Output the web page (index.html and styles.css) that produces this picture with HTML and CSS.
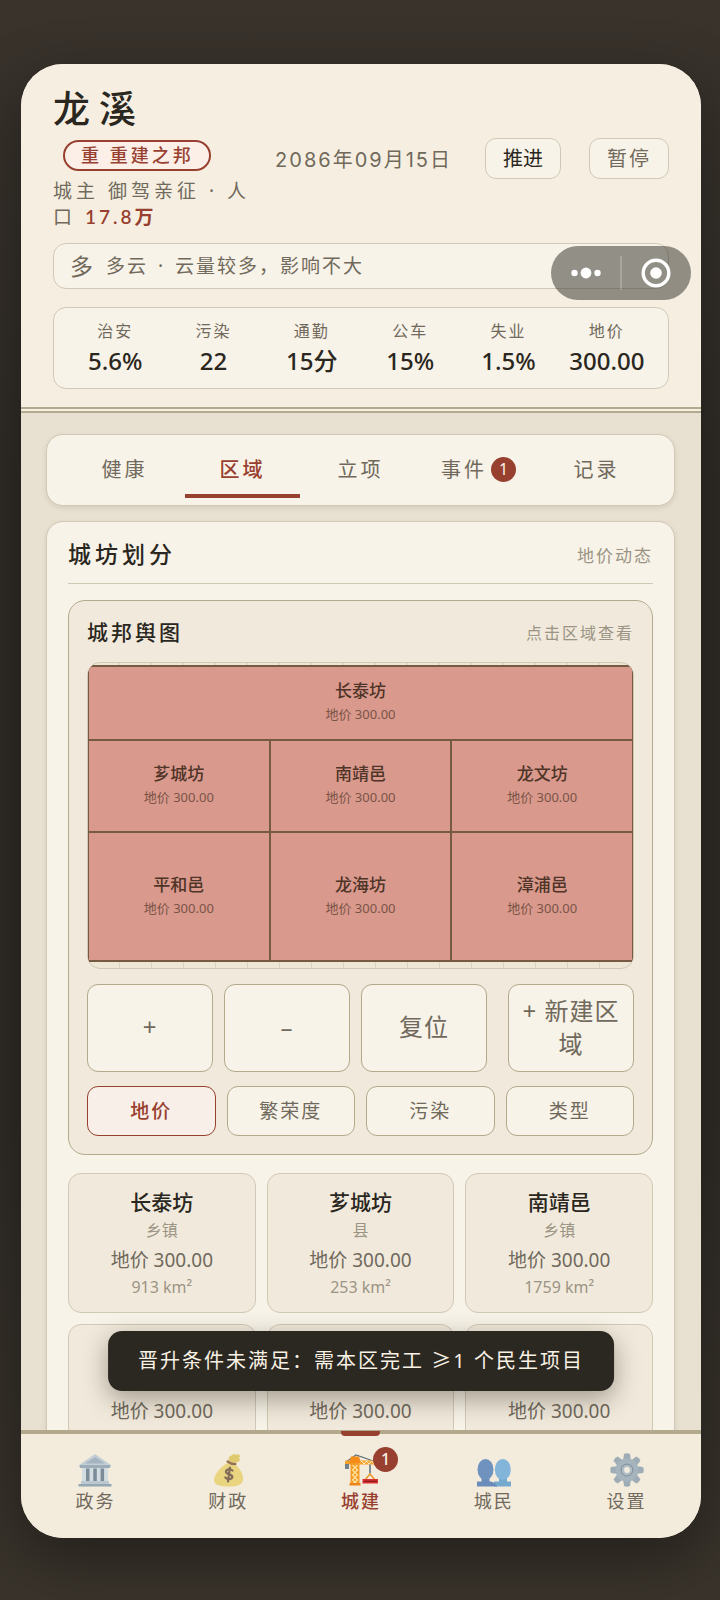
FILE: index.html
```html
<!DOCTYPE html>
<html lang="zh-CN">
<head>
<meta charset="utf-8">
<meta name="viewport" content="width=device-width, initial-scale=1">
<title>龙溪</title>
<link rel="stylesheet" href="styles.css">
</head>
<body>
<div class="phone">
  <header class="header">
    <div class="head-row">
      <div class="identity">
        <h1 class="city">龙溪</h1>
        <span class="rank">重 重建之邦</span>
        <p class="lord">城主 御驾亲征 · 人口 <strong class="population">17.8万</strong></p>
      </div>
      <time class="date" datetime="2086-09-15">2086年09月15日</time>
      <button class="head-btn head-btn-main" type="button">推进</button>
      <button class="head-btn" type="button">暂停</button>
    </div>
    <div class="weather"><span class="weather-icon">多</span><span>多云<span class="dot"> · </span>云量较多，影响不大</span></div>
    <dl class="stats">
      <div class="stat"><dt>治安</dt><dd>5.6%</dd></div>
      <div class="stat"><dt>污染</dt><dd>22</dd></div>
      <div class="stat"><dt>通勤</dt><dd>15分</dd></div>
      <div class="stat"><dt>公车</dt><dd>15%</dd></div>
      <div class="stat"><dt>失业</dt><dd>1.5%</dd></div>
      <div class="stat"><dt>地价</dt><dd>300.00</dd></div>
    </dl>
  </header>

  <main class="content">
    <div class="tabs">
      <button class="tab" type="button">健康</button>
      <button class="tab tab-active" type="button">区域</button>
      <button class="tab" type="button">立项</button>
      <button class="tab" type="button">事件<span class="badge">1</span></button>
      <button class="tab" type="button">记录</button>
    </div>

    <section class="card">
      <div class="card-head">
        <h2 class="card-title">城坊划分</h2>
        <span class="card-note">地价动态</span>
      </div>

      <div class="map-card">
        <div class="map-head">
          <h3 class="map-title">城邦舆图</h3>
          <span class="map-note">点击区域查看</span>
        </div>
        <div class="map">
          <div class="regions">
            <button class="region region-wide" type="button"><span class="region-name">长泰坊</span><span class="region-price">地价 300.00</span></button>
            <button class="region" type="button"><span class="region-name">芗城坊</span><span class="region-price">地价 300.00</span></button>
            <button class="region" type="button"><span class="region-name">南靖邑</span><span class="region-price">地价 300.00</span></button>
            <button class="region" type="button"><span class="region-name">龙文坊</span><span class="region-price">地价 300.00</span></button>
            <button class="region" type="button"><span class="region-name">平和邑</span><span class="region-price">地价 300.00</span></button>
            <button class="region" type="button"><span class="region-name">龙海坊</span><span class="region-price">地价 300.00</span></button>
            <button class="region" type="button"><span class="region-name">漳浦邑</span><span class="region-price">地价 300.00</span></button>
          </div>
        </div>
        <div class="tools">
          <button class="tool" type="button">+</button>
          <button class="tool" type="button">–</button>
          <button class="tool" type="button">复位</button>
          <button class="tool tool-new" type="button">+ 新建区域</button>
        </div>
        <div class="layers">
          <button class="layer layer-active" type="button">地价</button>
          <button class="layer" type="button">繁荣度</button>
          <button class="layer" type="button">污染</button>
          <button class="layer" type="button">类型</button>
        </div>
      </div>

      <div class="districts">
        <article class="district"><h4>长泰坊</h4><p class="kind">乡镇</p><p class="price">地价 300.00</p><p class="area">913 km²</p></article>
        <article class="district"><h4>芗城坊</h4><p class="kind">县</p><p class="price">地价 300.00</p><p class="area">253 km²</p></article>
        <article class="district"><h4>南靖邑</h4><p class="kind">乡镇</p><p class="price">地价 300.00</p><p class="area">1759 km²</p></article>
        <article class="district"><h4>龙文坊</h4><p class="kind">县</p><p class="price">地价 300.00</p></article>
        <article class="district"><h4>平和邑</h4><p class="kind">乡镇</p><p class="price">地价 300.00</p></article>
        <article class="district"><h4>龙海坊</h4><p class="kind">县</p><p class="price">地价 300.00</p></article>
      </div>
    </section>
  </main>

  <nav class="nav">
    <button class="nav-item" type="button">
      <svg class="nav-icon" viewBox="0 0 34 34" aria-hidden="true">
        <path d="M1 12 17 1l16 11v2H1z" fill="#b4c5d3"/><path d="M7 10.500 17 4l10 6.500z" fill="#8ca2b6"/>
        <path d="M2 12h30v3H2z" fill="#7f97ad"/><path d="M4 15h26v14H4z" fill="#c9d7e2"/>
        <path d="M8 15.500h3.500V29H8zM15.300 15.500h3.500V29h-3.500zM22.600 15.500h3.500V29h-3.500z" fill="#536b80"/>
        <path d="M3 28h28v3H3z" fill="#a9bccb"/><path d="M.5 31h33v2.500H.5z" fill="#7790a6"/>
      </svg>
      <span>政务</span>
    </button>
    <button class="nav-item" type="button">
      <svg class="nav-icon" viewBox="0 0 34 34" aria-hidden="true">
        <path d="M18 9c-1-4 0-6 2-6 1-2 4-3 5-1 3-2 5 1 3 3 2 2 0 4-2 4l-3 3z" fill="#d9bf4c"/>
        <path d="M16 10c-6 4-13 11-13 17 0 5 6 6.500 14.500 6.500S32 32 32 26c0-7-4-11-8-15z" fill="#e6ce62"/>
        <path d="M16.500 8.500c2 1.500 5 2.800 8 2.500" fill="none" stroke="#75492f" stroke-width="2.200" stroke-linecap="round"/>
        <path d="M21.500 17.500c-2-2-6.500-1.500-6.500 1.300 0 3.200 6.500 2 6.300 5.200-.2 2.700-5 2.700-7 .5M19 14.500 17 28.500" fill="none" stroke="#5d4130" stroke-width="2.200" stroke-linecap="round"/>
      </svg>
      <span>财政</span>
    </button>
    <button class="nav-item nav-active" type="button">
      <span class="nav-art">
        <svg class="nav-icon" viewBox="0 0 34 34" aria-hidden="true">
          <path d="M2 9 12 2l20 7" fill="none" stroke="#5f6f78" stroke-width="1.200"/>
          <path d="M1 7.500h32v4H1z" fill="#f7a12b"/><path d="m15 11 2.500-3 2.500 3 2.500-3 2.500 3 2.500-3 2.500 3" fill="none" stroke="#fff0c8"/>
          <path d="M7 3.500h8l2 7H5z" fill="#f58b19"/><path d="M6.500 10.500h9V31h-9z" fill="#f59a23"/>
          <path d="m8.500 12 5 5-5 5 5 5-5 4m5-19-5 5 5 5-5 5 5 4" fill="none" stroke="#ffe2a0" stroke-width="1.300"/>
          <path d="M1 11h4v5H1z" fill="#71818c"/><path d="M5.500 30h11v2.500h-11z" fill="#ee8519"/>
          <path d="M26 11.500v9" stroke="#59707c" stroke-width="1.500"/><path d="m21 27 5-6 5 6" fill="none" stroke="#e99928" stroke-width="1.500"/>
          <path d="M18.500 26H34v4.500H18.500z" fill="#d83332"/><path d="M20 28.300h13" stroke="#8c1718" stroke-width="1.200"/>
        </svg>
        <span class="badge nav-badge">1</span>
      </span>
      <span>城建</span>
    </button>
    <button class="nav-item" type="button">
      <svg class="nav-icon" viewBox="0 0 34 34" aria-hidden="true">
        <path d="M17 33.500V28.500h17v5z" fill="#4b93c9"/><path d="M22 24h8v6h-8z" fill="#4b93c9"/>
        <ellipse cx="25.800" cy="16.500" rx="8" ry="10.500" fill="#5da3d8"/>
        <path d="M0 33.500V28.500h12c4 0 7 2 8 5z" fill="#3d6dae"/><path d="M4.500 24h8v6h-8z" fill="#3d6dae"/>
        <ellipse cx="8.500" cy="16.500" rx="8" ry="10.500" fill="#4575b6"/>
      </svg>
      <span>城民</span>
    </button>
    <button class="nav-item" type="button">
      <svg class="nav-icon" viewBox="0 0 34 34" aria-hidden="true">
        <g fill="#8298a8"><path id="tooth" d="M14 1q3-1.500 6 0l.8 6h-7.600z"/><use href="#tooth" transform="rotate(45 17 17)"/><use href="#tooth" transform="rotate(90 17 17)"/><use href="#tooth" transform="rotate(135 17 17)"/><use href="#tooth" transform="rotate(180 17 17)"/><use href="#tooth" transform="rotate(225 17 17)"/><use href="#tooth" transform="rotate(270 17 17)"/><use href="#tooth" transform="rotate(315 17 17)"/></g>
        <circle cx="17" cy="17" r="8.500" fill="none" stroke="#8da3b3" stroke-width="6"/>
        <circle cx="17" cy="17" r="5.800" fill="#9db1bf" stroke="#60798c" stroke-width="1.200"/>
        <circle cx="17" cy="17" r="2.900" fill="#f1ecdf"/>
      </svg>
      <span>设置</span>
    </button>
  </nav>

  <div class="toast" role="status">晋升条件未满足：需本区完工 ≥1 个民生项目</div>

  <div class="capsule">
    <button class="capsule-btn" type="button" aria-label="更多"><svg class="dots" viewBox="0 0 32 12" aria-hidden="true"><circle cx="4.500" cy="6" r="3.200"/><circle cx="16" cy="6" r="5.400"/><circle cx="27.500" cy="6" r="3.200"/></svg></button>
    <button class="capsule-btn" type="button" aria-label="关闭"><svg class="ring" viewBox="0 0 30 30" aria-hidden="true"><circle cx="15" cy="15" r="12.800" fill="none" stroke="#fff" stroke-width="3.400"/><circle cx="15" cy="15" r="5.800"/></svg></button>
  </div>
</div>
</body>
</html>
```

FILE: styles.css
```css
:root {
  --ink: #2a2620;
  --muted: #70695c;
  --faint: #9b9484;
  --red: #98402f;
  --line: #d1c8b5;
  --line-dark: #b3a98c;
  --paper: #f8f3e8;
  --paper-deep: #f1eadc;
}

* { box-sizing: border-box; }

body {
  display: flex;
  height: 100vh;
  margin: 0;
  padding: 64px 19px 62px 21px;
  background: linear-gradient(#39332c, #2f2b26 30%, #2f2b26 70%, #39332b);
  color: var(--ink);
  font-family: "Noto Sans", "Noto Sans CJK SC", sans-serif;
}

h1, h2, h3, h4, p, dl, dd { margin: 0; }

button {
  padding: 0;
  border: 0;
  background: none;
  color: inherit;
  font-family: inherit;
}

.phone {
  position: relative;
  display: flex;
  flex: 1;
  flex-direction: column;
  min-width: 0;
  border-radius: 42px;
  background: #e8e0d1;
  box-shadow: 0 20px 60px rgba(0, 0, 0, .36);
  overflow: clip;
}

/* header */
.header {
  padding: 22px 32px 18px;
  border-bottom: 6px double var(--line-dark);
  background: #f6efe1;
}

.head-row {
  display: flex;
  align-items: center;
  gap: 28px;
}

.identity { flex: 1; min-width: 0; }

.city {
  font-size: 37px;
  font-weight: 500;
  line-height: 46px;
  letter-spacing: 9px;
}

.rank {
  display: block;
  width: fit-content;
  margin: 8px 0 7px 10px;
  padding: 0 15px 0 16px;
  border: 2px solid var(--red);
  border-radius: 16px;
  background: #fbefe8;
  color: var(--red);
  font-size: 18px;
  font-weight: 500;
  line-height: 27px;
  letter-spacing: 3px;
  white-space: nowrap;
}

.lord {
  margin-right: -12px;
  color: var(--muted);
  font-size: 19px;
  line-height: 26px;
  letter-spacing: 4px;
}

.population {
  color: var(--red);
  font-family: Lato, "Noto Sans CJK SC", sans-serif;
  font-weight: 600;
  letter-spacing: 3px;
}

.date {
  margin-right: 5px;
  color: var(--muted);
  font-family: Inter, "Noto Sans CJK SC", sans-serif;
  font-size: 20px;
  letter-spacing: 2px;
  white-space: nowrap;
}

.head-btn {
  padding: 0 17px;
  border: 1px solid var(--line);
  border-radius: 11px;
  background: var(--paper);
  color: var(--muted);
  font-size: 20px;
  line-height: 39px;
  letter-spacing: 2px;
  white-space: nowrap;
}

.head-btn-main {
  color: var(--ink);
  letter-spacing: 0;
}

.weather {
  display: flex;
  align-items: center;
  gap: 13px;
  margin-top: 13px;
  padding: 0 16px;
  border: 1px solid var(--line);
  border-radius: 13px;
  background: var(--paper);
  color: var(--muted);
  font-size: 19px;
  line-height: 44px;
  letter-spacing: 2px;
}

.weather-icon { font-size: 23px; letter-spacing: 0; }
.dot { margin: 0 3px; }

.stats {
  display: grid;
  grid-template-columns: repeat(6, 1fr);
  margin-top: 18px;
  padding: 10px 12px;
  border: 1px solid var(--line);
  border-radius: 13px;
  background: var(--paper);
  text-align: center;
}

.stat dt {
  color: var(--muted);
  font-size: 16px;
  line-height: 26px;
  letter-spacing: 2px;
}

.stat dd {
  font-size: 24px;
  font-weight: 500;
  line-height: 34px;
}

/* scrolling content */
.content {
  display: flex;
  flex: 1;
  flex-direction: column;
  gap: 15px;
  min-height: 0;
  padding: 21px 26px 0 25px;
  overflow: hidden;
}

.tabs, .card {
  flex: none;
  border: 1px solid var(--line);
  background: var(--paper);
  box-shadow: 0 2px 5px rgba(80, 65, 40, .12);
}

.tabs {
  display: grid;
  grid-template-columns: repeat(5, 1fr);
  gap: 3px;
  padding: 6px 20px 7px;
  border-radius: 17px;
}

.tab {
  position: relative;
  display: flex;
  align-items: center;
  justify-content: center;
  gap: 4px;
  color: var(--muted);
  font-size: 20px;
  line-height: 57px;
  letter-spacing: 3px;
}

.tab-active { color: var(--red); font-weight: 500; }

.tab-active::after {
  content: "";
  position: absolute;
  inset: auto 0 0;
  height: 4px;
  background: var(--red);
}

.badge {
  width: 25px;
  border-radius: 50%;
  background: var(--red);
  color: #fbf3e6;
  font-size: 16px;
  line-height: 25px;
  letter-spacing: 0;
  text-align: center;
}

.card {
  padding: 16px 21px 0;
  border-radius: 17px;
}

.card-head {
  display: flex;
  align-items: center;
  justify-content: space-between;
  padding-bottom: 13px;
  border-bottom: 1px solid var(--line);
}

.card-title {
  font-size: 23px;
  font-weight: 500;
  line-height: 32px;
  letter-spacing: 4px;
}

.card-note { color: var(--faint); font-size: 17px; letter-spacing: 2px; }

.map-card {
  margin-top: 16px;
  padding: 15px 18px 18px;
  border: 1px solid var(--line-dark);
  border-radius: 17px;
  background: var(--paper-deep);
}

.map-head {
  display: flex;
  align-items: center;
  justify-content: space-between;
}

.map-title {
  font-size: 21px;
  font-weight: 500;
  line-height: 32px;
  letter-spacing: 3px;
}

.map-note { color: var(--faint); font-size: 16px; letter-spacing: 2px; }

.map {
  margin-top: 14px;
  padding: 2px 0 6px;
  border: 1px solid var(--line);
  border-radius: 13px;
  background: repeating-linear-gradient(90deg, transparent 0 31px, #ddd2bc 31px 32px) #efe7d5;
  overflow: hidden;
}

.regions {
  display: grid;
  grid-template-columns: repeat(3, 1fr);
  grid-template-rows: 72px 90px 127px;
  gap: 2px;
  border: solid #765b43;
  border-width: 2px 1px;
  background: #765b43;
}

.region {
  display: flex;
  flex-direction: column;
  align-items: center;
  justify-content: center;
  padding-bottom: 2px;
  background: #d9998c;
  color: #4f3428;
}

.region-wide { grid-column: 1 / -1; }
.region-name { font-size: 17px; font-weight: 500; line-height: 24px; }
.region-price { color: #7a5448; font-size: 13px; line-height: 22px; }

.tools, .layers { display: flex; gap: 11px; }
.tools { margin-top: 15px; }
.layers { margin-top: 14px; }

.tool, .layer {
  flex: 1 1 0;
  min-width: 0;
  border: 1px solid var(--line-dark);
  border-radius: 11px;
  background: var(--paper);
  color: var(--muted);
}

.tool {
  min-height: 88px;
  padding: 0 8px 3px;
  font-size: 24px;
  line-height: 33px;
  letter-spacing: 1px;
}

.tool-new { margin-left: 10px; }

.layer {
  font-size: 19px;
  line-height: 48px;
  letter-spacing: 2px;
}

.layer-active {
  border-color: var(--red);
  background: #f9efe9;
  color: var(--red);
  font-weight: 500;
}

.districts {
  display: grid;
  grid-template-columns: repeat(3, 1fr);
  gap: 11px;
  margin-top: 18px;
}

.district {
  min-height: 140px;
  padding: 13px 0 12px;
  border: 1px solid var(--line);
  border-radius: 13px;
  background: var(--paper-deep);
  text-align: center;
}

.district h4 { font-size: 21px; font-weight: 500; line-height: 30px; }
.kind { color: var(--faint); font-size: 16px; line-height: 26px; }
.price { color: var(--muted); font-size: 19px; line-height: 34px; }
.area { color: var(--faint); font-size: 16px; line-height: 21px; }

/* bottom navigation */
.nav {
  display: grid;
  grid-template-columns: repeat(5, 1fr);
  padding: 0 8px 23px;
  border-top: 4px solid var(--line-dark);
  background: #f3ecdd;
}

.nav-item {
  position: relative;
  display: flex;
  flex-direction: column;
  align-items: center;
  padding-top: 19px;
  color: var(--muted);
  font-size: 18px;
  line-height: 28px;
  letter-spacing: 2px;
}

.nav-icon {
  display: block;
  width: 34px;
  height: 34px;
  opacity: .75;
}

.nav-art { position: relative; }
.nav-active { color: var(--red); font-weight: 500; }
.nav-active .nav-icon { opacity: 1; }

.nav-active::before {
  content: "";
  position: absolute;
  top: -3px;
  width: 39px;
  height: 5px;
  border-radius: 0 0 4px 4px;
  background: var(--red);
}

.nav-badge {
  position: absolute;
  top: -6px;
  left: 29px;
}

.toast {
  position: absolute;
  bottom: 147px;
  left: 50%;
  padding: 0 30px;
  border-radius: 14px;
  background: #2b2721;
  box-shadow: 0 8px 26px rgba(40, 32, 20, .4);
  color: #f8f1e4;
  font-size: 20px;
  line-height: 60px;
  letter-spacing: 2px;
  white-space: nowrap;
  transform: translateX(-50%);
}

.capsule {
  position: absolute;
  top: 182px;
  right: 10px;
  display: flex;
  width: 140px;
  height: 54px;
  border-radius: 27px;
  background: rgba(60, 58, 52, .54);
}

.capsule-btn {
  display: flex;
  flex: 1;
  align-items: center;
  justify-content: center;
}

.capsule-btn + .capsule-btn::before {
  content: "";
  position: absolute;
  top: 10px;
  left: 69px;
  width: 2px;
  height: 34px;
  background: rgba(255, 255, 255, .2);
}

.capsule svg { fill: #fff; }
.dots { width: 32px; height: 12px; }
.ring { width: 30px; height: 30px; }
```
